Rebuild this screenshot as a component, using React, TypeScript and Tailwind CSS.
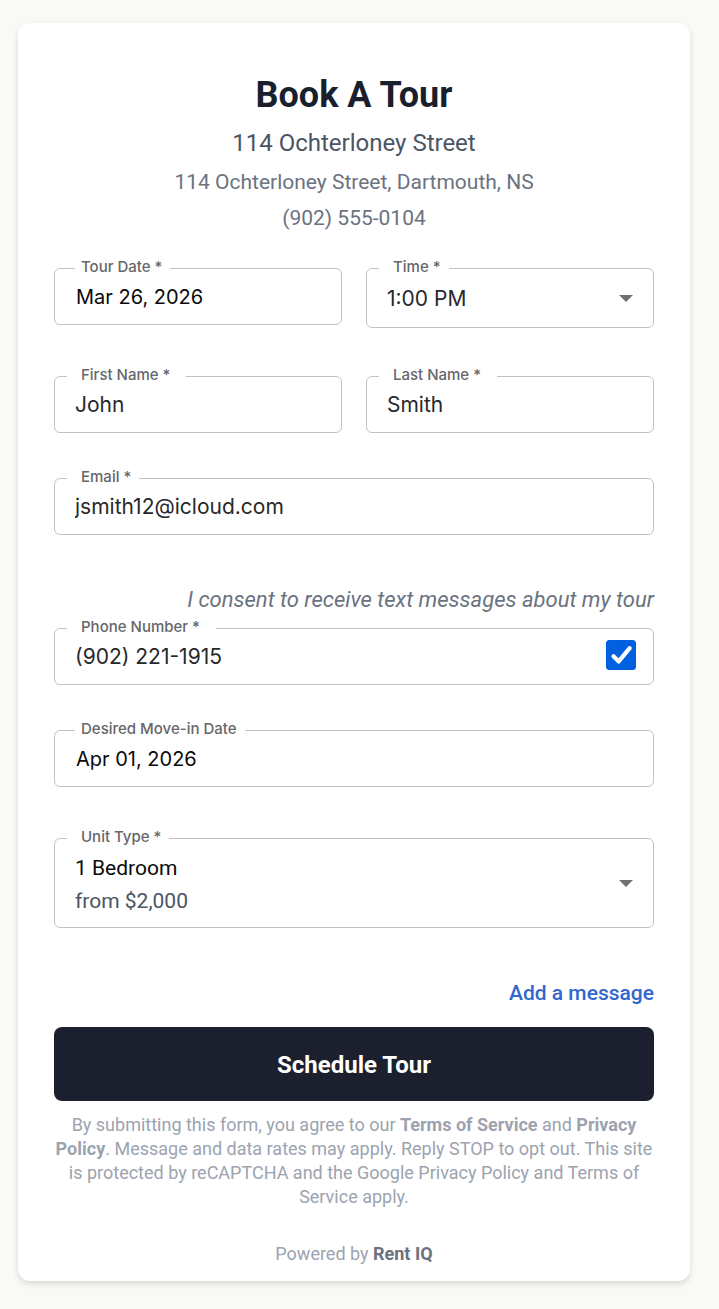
import { useState } from "react";
import type { ReactNode } from "react";

const inter = "font-['Inter',sans-serif]";
const frame = "relative flex items-center rounded-md border border-[#c2c2c5] bg-white";
const valueText = "w-full min-w-0 bg-transparent leading-7 outline-none";

type Notch = "narrow" | "medium" | "wide";

const notchClass: Record<Notch, string> = {
  narrow: "left-5 pl-1.5 pr-2",
  medium: "left-3 pl-3.5 pr-2",
  wide: "left-3 pl-3.5 pr-4",
};

function FieldLabel({ id, notch, children }: { id: string; notch: Notch; children: ReactNode }) {
  return (
    <label
      htmlFor={id}
      className={`absolute -top-3 z-10 bg-white text-[15px] leading-5 font-medium whitespace-nowrap text-[#66666b] ${inter} ${notchClass[notch]}`}
    >
      {children}
    </label>
  );
}

interface TextFieldProps {
  id: string;
  label: string;
  value: string;
  type?: string;
  notch?: Notch;
  dark?: boolean;
  children?: ReactNode;
}

function TextField({ id, label, value, type = "text", notch = "wide", dark = false, children }: TextFieldProps) {
  const [text, setText] = useState(value);
  return (
    <div className={`${frame} h-[57px] pr-[17px] ${dark ? "pl-[21px]" : "pl-5"}`}>
      <FieldLabel id={id} notch={notch}>
        {label}
      </FieldLabel>
      <input
        id={id}
        type={type}
        value={text}
        onChange={(e) => setText(e.target.value)}
        className={`${valueText} ${inter} ${dark ? "text-[20px] text-[#0a0a0a]" : "text-[21px] text-[#28282b]"}`}
      />
      {children}
    </div>
  );
}

function Caret() {
  return (
    <svg viewBox="0 0 14 7" className="h-[7px] w-3.5 shrink-0" aria-hidden="true">
      <path d="M0 0h14L7 7z" fill="#707072" />
    </svg>
  );
}

function TimeField() {
  return (
    <div className={`${frame} h-15 pl-5 pr-5`}>
      <FieldLabel id="time" notch="medium">
        Time *
      </FieldLabel>
      <select
        id="time"
        defaultValue="1:00 PM"
        className={`${valueText} ${inter} appearance-none pt-0.5 text-[21px] text-[#28282b]`}
      >
        <option>1:00 PM</option>
      </select>
      <Caret />
    </div>
  );
}

function UnitField() {
  return (
    <div className={`${frame} mt-[51px] h-[90px] pl-5 pr-5`}>
      <FieldLabel id="unit" notch="medium">
        Unit Type *
      </FieldLabel>
      <div className="flex-1 pt-1 text-[21px] leading-[33px]">
        <p className="text-[#0a0a0a]">1 Bedroom</p>
        <p className="text-[#4b5563]">from $2,000</p>
      </div>
      <Caret />
      <select id="unit" className="absolute inset-0 size-full opacity-0">
        <option>1 Bedroom</option>
      </select>
    </div>
  );
}

function ConsentCheckbox() {
  const [checked, setChecked] = useState(true);
  return (
    <span className="relative -mt-1 size-[30px] shrink-0">
      <input
        id="consent"
        type="checkbox"
        checked={checked}
        onChange={(e) => setChecked(e.target.checked)}
        className="block size-[30px] appearance-none rounded-[3px] border border-[#0060df] checked:bg-[#0060df]"
      />
      {checked && (
        <svg viewBox="0 0 30 30" className="pointer-events-none absolute inset-0 size-full" aria-hidden="true">
          <path
            d="M7.5 16.2L12.7 21.4L23.7 8.2"
            fill="none"
            stroke="white"
            strokeWidth="4.2"
            strokeLinecap="round"
            strokeLinejoin="round"
          />
        </svg>
      )}
    </span>
  );
}

export default function App() {
  return (
    <main className="min-h-screen bg-[#f9faf5] pt-[23px] pr-[29px] pb-7 pl-[18px] font-['Roboto',sans-serif]">
      <form
        onSubmit={(e) => e.preventDefault()}
        className="flex flex-col rounded-xl bg-white px-9 pt-12 pb-3.5 shadow-[0_3px_6px_rgba(0,0,0,0.13)]"
      >
        <header className="text-center">
          <h1 className="text-[36px] leading-12 font-bold text-[#1a1f2e]">Book A Tour</h1>
          <h2 className="mt-[3px] text-[24px] leading-[42px] text-[#4b5563]">114 Ochterloney Street</h2>
          <address className="text-[21px] leading-9 text-[#6b7280] not-italic">
            <p>114 Ochterloney Street, Dartmouth, NS</p>
            <p>(902) 555-0104</p>
          </address>
        </header>

        <div className="mt-8 grid grid-cols-2 items-start gap-x-6 gap-y-12">
          <TextField id="tour-date" label="Tour Date *" value="Mar 26, 2026" notch="narrow" dark />
          <TimeField />
          <TextField id="first-name" label="First Name *" value="John" />
          <TextField id="last-name" label="Last Name *" value="Smith" />
        </div>

        <div className="mt-[45px]">
          <TextField id="email" label="Email *" value="jsmith12@icloud.com" type="email" notch="medium" />
        </div>

        <label htmlFor="consent" className="mt-12 text-right text-[22px] leading-[34px] text-[#6b7280] italic">
          I consent to receive text messages about my tour
        </label>
        <div className="mt-[11px]">
          <TextField id="phone" label="Phone Number *" value="(902) 221-1915" type="tel">
            <ConsentCheckbox />
          </TextField>
        </div>

        <div className="mt-[45px]">
          <TextField id="move-in" label="Desired Move-in Date" value="Apr 01, 2026" notch="narrow" dark />
        </div>

        <UnitField />

        <button type="button" className="mt-12 self-end text-[21px] leading-[34px] font-medium text-[#2f66cf]">
          Add a message
        </button>

        <button
          type="submit"
          className="mt-[17px] h-[74px] rounded-lg bg-[#1c1f2d] pt-0.5 text-[24px] leading-9 font-bold text-white"
        >
          Schedule Tour
        </button>

        <p className="mt-3 text-center text-[18px] leading-6 text-[#9ca3af]">
          By submitting this form, you agree to our{" "}
          <a href="#terms" className="font-bold">
            Terms of Service
          </a>{" "}
          and{" "}
          <a href="#privacy" className="font-bold">
            Privacy Policy
          </a>
          . Message and data rates may apply. Reply STOP to opt out. This site is protected by reCAPTCHA and the Google
          Privacy Policy and Terms of Service apply.
        </p>

        <p className="mt-8 text-center text-[18px] leading-[26px] text-[#9ca3af]">
          Powered by{" "}
          <a href="#rent-iq" className="font-bold text-[#6b7280]">
            Rent IQ
          </a>
        </p>
      </form>
    </main>
  );
}
